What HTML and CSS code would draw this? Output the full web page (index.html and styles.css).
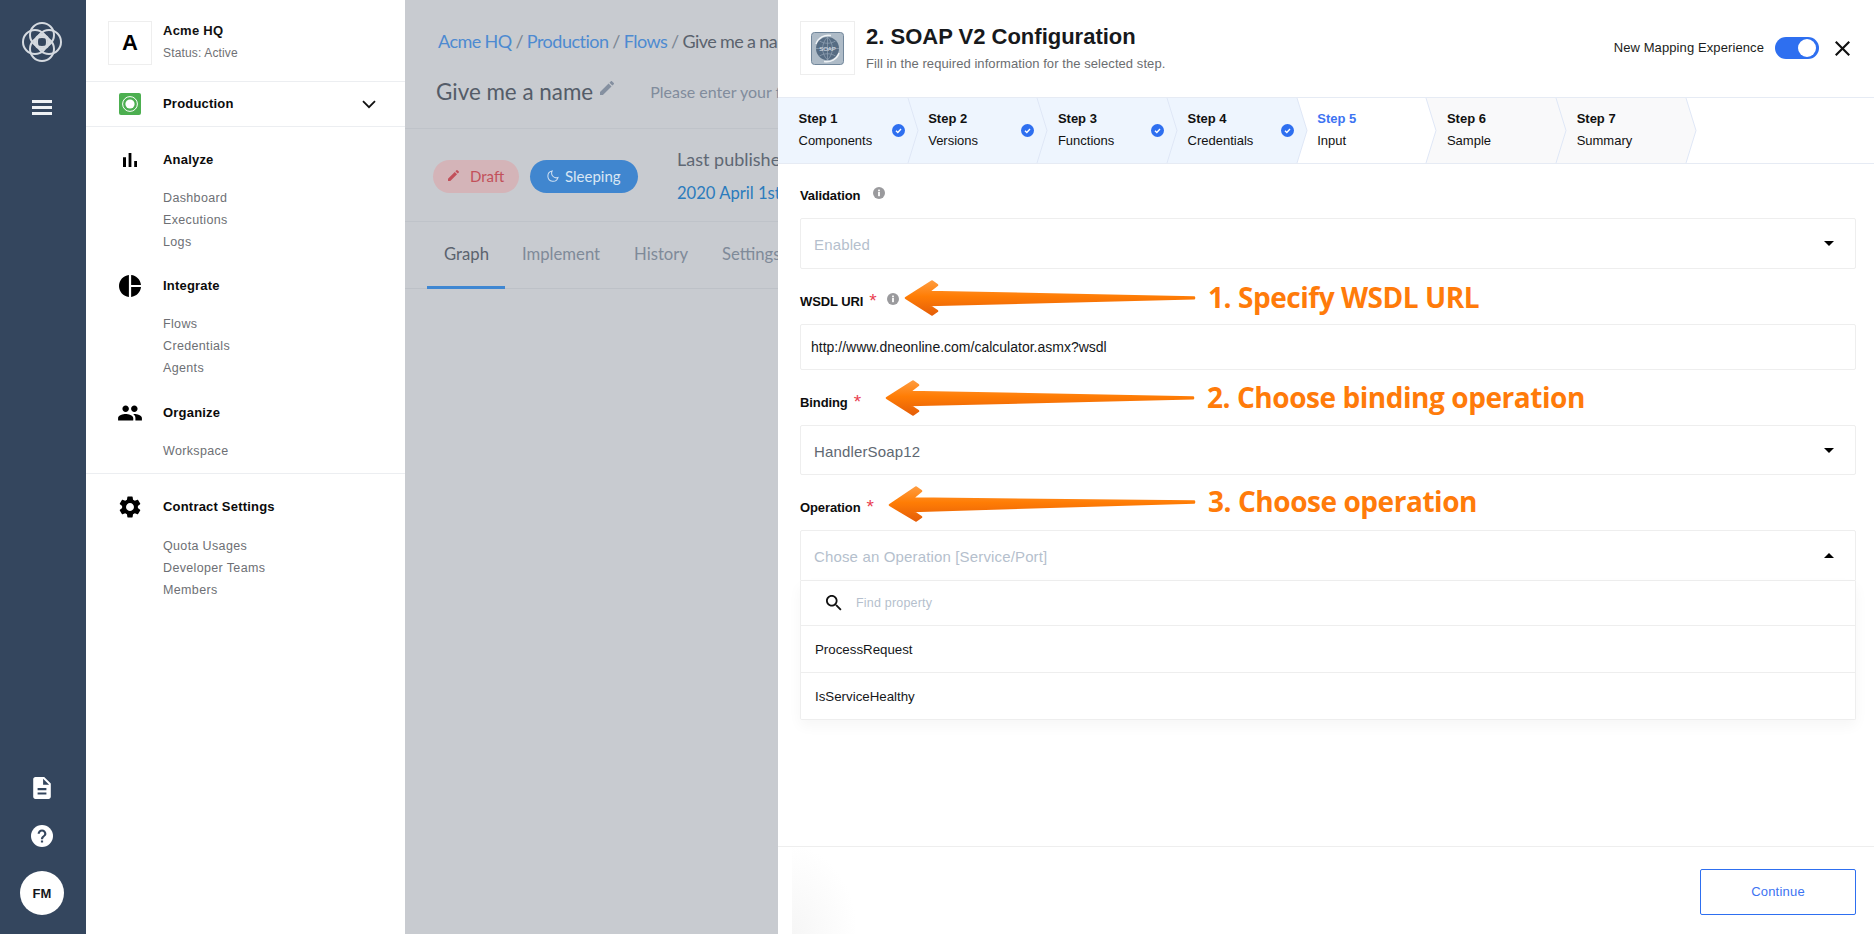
FILE: index.html
```html
<!DOCTYPE html>
<html lang="en">
<head>
<meta charset="utf-8">
<title>SOAP V2 Configuration</title>
<link rel="stylesheet" href="styles.css">
</head>
<body>
<div class="app">
  <aside class="rail">
    <svg class="logo" viewBox="0 0 40 40" fill="none" stroke="#d5dae0" stroke-width="2">
      <circle cx="20" cy="13" r="12"/><circle cx="20" cy="27" r="12"/><circle cx="13" cy="20" r="12"/><circle cx="27" cy="20" r="12"/><circle cx="20" cy="20" r="7" stroke-width="2.6"/>
    </svg>
    <div class="burger"><span></span><span></span><span></span></div>
    <div class="rail-spacer"></div>
    <svg class="rail-doc" viewBox="4 2 16 20"><path fill="#fff" d="M14 2H6c-1.1 0-1.99.9-1.99 2L4 20c0 1.1.89 2 1.99 2H18c1.1 0 2-.9 2-2V8l-6-6zm2 16H8v-2h8v2zm0-4H8v-2h8v2zm-3-5V3.5L18.5 9H13z"/></svg>
    <svg class="rail-help" viewBox="2 2 20 20"><circle cx="12" cy="12" r="10" fill="#fff"/><path fill="#34465e" d="M11 18h2v-2h-2v2zM12 6c-2.21 0-4 1.79-4 4h2c0-1.1.9-2 2-2s2 .9 2 2c0 2-3 1.75-3 5h2c0-2.25 3-2.5 3-5 0-2.21-1.79-4-4-4z"/></svg>
    <div class="avatar">FM</div>
  </aside>

  <nav class="nav">
    <div class="org">
      <div class="org-badge">A</div>
      <div class="org-text">
        <div class="org-name">Acme HQ</div>
        <div class="org-status">Status: Active</div>
      </div>
    </div>
    <div class="env">
      <span class="nav-icon"><svg class="env-icon" viewBox="0 0 22 22"><rect width="22" height="22" rx="2" fill="#4caf50"/><circle cx="11" cy="11" r="7.4" fill="none" stroke="#fff" stroke-width="1"/><circle cx="11" cy="11" r="4.6" fill="#fff"/></svg></span>
      <span class="nav-title">Production</span>
      <svg class="env-chevron" viewBox="0 0 14 9" fill="none" stroke="#111" stroke-width="1.8"><path d="M1 1.2l6 6 6-6"/></svg>
    </div>
    <section class="nav-group nav-group-analyze">
      <div class="nav-head"><span class="nav-icon"><svg class="icon-24" viewBox="0 0 24 24"><path d="M5 9.2h3V19H5zM10.6 5h2.8v14h-2.8zm5.6 8H19v6h-2.8z"/></svg></span><span class="nav-title">Analyze</span></div>
      <ul class="nav-items"><li>Dashboard</li><li>Executions</li><li>Logs</li></ul>
    </section>
    <section class="nav-group">
      <div class="nav-head"><span class="nav-icon"><svg class="icon-22" viewBox="2 2 20 20"><path d="M11 2v20c-5.07-.5-9-4.79-9-10s3.93-9.5 9-10zm2.03 0v8.99H22c-.47-4.74-4.24-8.52-8.97-8.99zm0 11.01V22c4.74-.47 8.5-4.25 8.97-8.99h-8.97z"/></svg></span><span class="nav-title">Integrate</span></div>
      <ul class="nav-items"><li>Flows</li><li>Credentials</li><li>Agents</li></ul>
    </section>
    <section class="nav-group nav-group-last">
      <div class="nav-head"><span class="nav-icon"><svg class="icon-people" viewBox="0 0 24 24"><path d="M16 11c1.66 0 2.99-1.34 2.99-3S17.66 5 16 5c-1.66 0-3 1.34-3 3s1.34 3 3 3zm-8 0c1.66 0 2.99-1.34 2.99-3S9.66 5 8 5C6.34 5 5 6.34 5 8s1.34 3 3 3zm0 2c-2.33 0-7 1.17-7 3.5V19h14v-2.5c0-2.33-4.67-3.5-7-3.5zm8 0c-.29 0-.62.02-.97.05 1.16.84 1.97 1.97 1.97 3.45V19h6v-2.5c0-2.33-4.67-3.5-7-3.5z"/></svg></span><span class="nav-title">Organize</span></div>
      <ul class="nav-items"><li>Workspace</li></ul>
    </section>
    <section class="nav-group nav-group-contract">
      <div class="nav-head"><span class="nav-icon"><svg class="icon-24b" viewBox="2 2 20 20"><path d="M19.14 12.94c.04-.3.06-.61.06-.94 0-.32-.02-.64-.07-.94l2.03-1.58c.18-.14.23-.41.12-.61l-1.92-3.32c-.12-.22-.37-.29-.59-.22l-2.39.96c-.5-.38-1.03-.7-1.62-.94l-.36-2.54c-.04-.24-.24-.41-.48-.41h-3.84c-.24 0-.43.17-.47.41l-.36 2.54c-.59.24-1.13.57-1.62.94l-2.39-.96c-.22-.08-.47 0-.59.22L2.74 8.87c-.12.21-.08.47.12.61l2.03 1.58c-.05.3-.09.63-.09.94s.02.64.07.94l-2.03 1.58c-.18.14-.23.41-.12.61l1.92 3.32c.12.22.37.29.59.22l2.39-.96c.5.38 1.03.7 1.62.94l.36 2.54c.05.24.24.41.48.41h3.84c.24 0 .44-.17.47-.41l.36-2.54c.59-.24 1.13-.56 1.62-.94l2.39.96c.22.08.47 0 .59-.22l1.92-3.32c.12-.22.07-.47-.12-.61l-2.01-1.58zM12 15.6c-1.98 0-3.6-1.62-3.6-3.6s1.62-3.6 3.6-3.6 3.6 1.62 3.6 3.6-1.62 3.6-3.6 3.6z"/></svg></span><span class="nav-title">Contract Settings</span></div>
      <ul class="nav-items nav-items-contract"><li>Quota Usages</li><li>Developer Teams</li><li>Members</li></ul>
    </section>
  </nav>

  <main class="flow-page">
    <div class="flow-top">
      <div class="crumbs"><span class="crumb-link">Acme HQ</span> <span class="crumb-sep">/</span> <span class="crumb-link">Production</span> <span class="crumb-sep">/</span> <span class="crumb-link">Flows</span> <span class="crumb-sep">/</span> <span class="crumb-now">Give me a name</span></div>
      <div class="flow-name-row">
        <span class="flow-name">Give me a name</span>
        <svg class="flow-pencil" viewBox="3 3 18 18"><path d="M3 17.25V21h3.75L17.81 9.94l-3.75-3.75L3 17.25zM20.71 7.04c.39-.39.39-1.02 0-1.41l-2.34-2.34c-.39-.39-1.02-.39-1.41 0l-1.83 1.83 3.75 3.75 1.83-1.83z"/></svg>
        <span class="flow-desc">Please enter your flow description</span>
      </div>
    </div>
    <div class="flow-status">
      <span class="pill pill-draft"><svg class="pill-icon" viewBox="3 3 18 18"><path d="M3 17.25V21h3.75L17.81 9.94l-3.75-3.75L3 17.25zM20.71 7.04c.39-.39.39-1.02 0-1.41l-2.34-2.34c-.39-.39-1.02-.39-1.41 0l-1.83 1.83 3.75 3.75 1.83-1.83z"/></svg>Draft</span>
      <span class="pill pill-sleep"><svg class="pill-moon" viewBox="0 0 14 14" fill="none" stroke="#cfe0f2" stroke-width="1.2"><path d="M6 1.2a6 6 0 1 0 6.8 7.6A5.5 5.5 0 0 1 6 1.2z"/></svg>Sleeping</span>
      <div class="published">
        <div class="pub-label">Last published</div>
        <div class="pub-date">2020 April 1st at 10:21</div>
      </div>
    </div>
    <div class="tabs">
      <span class="tab tab-active">Graph</span>
      <span class="tab">Implement</span>
      <span class="tab">History</span>
      <span class="tab">Settings</span>
    </div>
  </main>

  <section class="panel">
    <header class="panel-head">
      <div class="comp-badge">
        <svg class="soap-logo" viewBox="0 0 33 33">
          <rect x=".5" y=".5" width="32" height="32" rx="3" fill="#aebbc7" stroke="#71869a"/>
          <path d="M5 12A13 13 0 0 1 20 3.5" fill="none" stroke="#eef2f5" stroke-width="1.6"/>
          <path d="M28 21A13 13 0 0 1 13 29.5" fill="none" stroke="#eef2f5" stroke-width="1.6"/>
          <circle cx="16.5" cy="16.5" r="11.5" fill="#566c83"/>
          <path d="M5 16.5h23M16.5 5v23M8.5 9c5 3 11 3 16 0M8.5 24c5-3 11-3 16 0M16.5 5c-6.500 6.500-6.500 16.500 0 23M16.500 5c6.500 6.500 6.500 16.500 0 23" fill="none" stroke="#93a5b6" stroke-width=".7"/>
          <text class="soap-text" x="16.5" y="18.500" text-anchor="middle">SOAP</text>
        </svg>
      </div>
      <div class="panel-titles">
        <h1 class="panel-title">2. SOAP V2 Configuration</h1>
        <p class="panel-sub">Fill in the required information for the selected step.</p>
      </div>
      <div class="panel-tools">
        <span class="mapping-label">New Mapping Experience</span>
        <span class="toggle"><span class="toggle-knob"></span></span>
        <svg class="close-x" viewBox="5 5 14 14"><path d="M19 6.41L17.59 5 12 10.59 6.41 5 5 6.41 10.59 12 5 17.59 6.41 19 12 13.41 17.59 19 19 17.59 13.41 12z"/></svg>
      </div>
    </header>

    <div class="stepper">
      <div class="step step-done"><div class="step-text"><b>Step 1</b><span>Components</span></div><svg class="step-check" viewBox="0 0 13 13"><circle cx="6.5" cy="6.5" r="6.5"/><path d="M4 6.8l1.8 1.7L9 5"/></svg><svg class="step-tip" viewBox="0 0 11 66" preserveAspectRatio="none"><path d="M0 0L10 33L0 66"/></svg></div>
      <div class="step step-done"><div class="step-text"><b>Step 2</b><span>Versions</span></div><svg class="step-check" viewBox="0 0 13 13"><circle cx="6.5" cy="6.5" r="6.5"/><path d="M4 6.8l1.8 1.7L9 5"/></svg><svg class="step-tip" viewBox="0 0 11 66" preserveAspectRatio="none"><path d="M0 0L10 33L0 66"/></svg></div>
      <div class="step step-done"><div class="step-text"><b>Step 3</b><span>Functions</span></div><svg class="step-check" viewBox="0 0 13 13"><circle cx="6.5" cy="6.5" r="6.5"/><path d="M4 6.8l1.8 1.7L9 5"/></svg><svg class="step-tip" viewBox="0 0 11 66" preserveAspectRatio="none"><path d="M0 0L10 33L0 66"/></svg></div>
      <div class="step step-done"><div class="step-text"><b>Step 4</b><span>Credentials</span></div><svg class="step-check" viewBox="0 0 13 13"><circle cx="6.5" cy="6.5" r="6.5"/><path d="M4 6.8l1.8 1.7L9 5"/></svg><svg class="step-tip" viewBox="0 0 11 66" preserveAspectRatio="none"><path d="M0 0L10 33L0 66"/></svg></div>
      <div class="step step-now"><div class="step-text"><b>Step 5</b><span>Input</span></div><svg class="step-tip" viewBox="0 0 11 66" preserveAspectRatio="none"><path d="M0 0L10 33L0 66"/></svg></div>
      <div class="step step-todo"><div class="step-text"><b>Step 6</b><span>Sample</span></div><svg class="step-tip" viewBox="0 0 11 66" preserveAspectRatio="none"><path d="M0 0L10 33L0 66"/></svg></div>
      <div class="step step-todo"><div class="step-text"><b>Step 7</b><span>Summary</span></div><svg class="step-tip" viewBox="0 0 11 66" preserveAspectRatio="none"><path d="M0 0L10 33L0 66"/></svg></div>
    </div>

    <div class="form">
      <div class="label label-validation">Validation<svg class="info" viewBox="0 0 12 12"><circle cx="6" cy="6" r="6"/><rect x="5.1" y="5" width="1.8" height="4.2"/><rect x="5.1" y="2.6" width="1.8" height="1.7"/></svg></div>
      <div class="box box-select"><span class="placeholder">Enabled</span><span class="caret"></span></div>

      <div class="label label-gap">WSDL URI<i class="req">*</i><svg class="info info-wsdl" viewBox="0 0 12 12"><circle cx="6" cy="6" r="6"/><rect x="5.1" y="5" width="1.8" height="4.2"/><rect x="5.1" y="2.6" width="1.8" height="1.7"/></svg></div>
      <div class="box box-input">http://www.dneonline.com/calculator.asmx?wsdl</div>

      <div class="label label-gap">Binding<i class="req">*</i></div>
      <div class="box box-select box-binding"><span class="value">HandlerSoap12</span><span class="caret"></span></div>

      <div class="label label-gap">Operation<i class="req">*</i></div>
      <div class="box box-select box-open"><span class="placeholder">Chose an Operation [Service/Port]</span><span class="caret caret-up"></span></div>
      <div class="dropdown">
        <div class="drop-search"><svg class="search-icon" viewBox="3 3 18 18"><path d="M15.5 14h-.79l-.28-.27C15.41 12.59 16 11.11 16 9.5 16 5.91 13.09 3 9.5 3S3 5.91 3 9.5 5.91 16 9.5 16c1.61 0 3.09-.59 4.23-1.57l.27.28v.79l5 4.99L20.49 19l-4.99-5zm-6 0C7.01 14 5 11.99 5 9.5S7.01 5 9.5 5 14 7.01 14 9.5 11.99 14 9.5 14z"/></svg><span class="drop-find">Find property</span></div>
        <div class="drop-item">ProcessRequest</div>
        <div class="drop-item">IsServiceHealthy</div>
      </div>
    </div>

    <footer class="panel-foot">
      <div class="foot-fade"></div>
      <button class="btn-continue" type="button">Continue</button>
    </footer>

    <div class="callout callout-1">
      <svg class="callout-arrow" width="292" height="36" viewBox="0 0 292 36"><defs><linearGradient id="ag1" x1="0" y1="0" x2="0" y2="1"><stop offset="0" stop-color="#ff9a3c"/><stop offset=".45" stop-color="#ff7d05"/><stop offset="1" stop-color="#e65f08"/></linearGradient></defs><path fill="url(#ag1)" stroke="url(#ag1)" stroke-width="2.5" stroke-linejoin="round" d="M2 18L28 1.500L33 5L24 12L290 17.400L290 18.200L24 25L33 31L28 34.500Z"/></svg>
      <span class="callout-text">1. Specify WSDL URL</span>
    </div>
    <div class="callout callout-2">
      <svg class="callout-arrow" width="310" height="36" viewBox="0 0 310 36"><path fill="url(#ag1)" stroke="url(#ag1)" stroke-width="2.5" stroke-linejoin="round" d="M2 18L28 1.500L33 5L24 12L308 17.400L308 18.200L24 25L33 31L28 34.500Z"/></svg>
      <span class="callout-text">2. Choose binding operation</span>
    </div>
    <div class="callout callout-3">
      <svg class="callout-arrow" width="308" height="36" viewBox="0 0 308 36"><path fill="url(#ag1)" stroke="url(#ag1)" stroke-width="2.5" stroke-linejoin="round" d="M2 19L28 1.500L33 5L24 12.500L306 15.600L306 16.400L24 25L33 31L28 34.500Z"/></svg>
      <span class="callout-text callout-text-high">3. Choose operation</span>
    </div>
  </section>
</div>
</body>
</html>
```

FILE: styles.css
```css
* { box-sizing: border-box; }
html, body { margin: 0; padding: 0; height: 100%; }
body { font-family: "Liberation Sans", Arial, sans-serif; color: #111; background: #fff; overflow: hidden; }
ul { list-style: none; margin: 0; padding: 0; }
h1, p { margin: 0; }

.app { display: flex; width: 1874px; height: 934px; }

/* icon rail */
.rail { width: 86px; flex: none; background: #34465e; display: flex; flex-direction: column; align-items: center; padding: 22px 2px 19px 0; }
.logo { width: 40px; height: 40px; }
.burger { margin-top: 38px; width: 20px; height: 15px; display: flex; flex-direction: column; justify-content: space-between; }
.burger span { display: block; height: 3px; background: #eef1f4; }
.rail-spacer { flex: 1; }
.rail-doc { width: 18px; height: 22px; }
.rail-help { width: 22px; height: 22px; margin-top: 26px; }
.avatar { width: 44px; height: 44px; margin-top: 24px; border-radius: 50%; background: #fff; color: #15181c; font-size: 13px; font-weight: 700; display: flex; align-items: center; justify-content: center; }

/* nav */
.nav { width: 319px; flex: none; background: #fff; }
.org { height: 82px; border-bottom: 1px solid #eceef1; display: flex; align-items: flex-start; padding: 21px 0 0 22px; }
.org-badge { width: 44px; height: 44px; border: 1px solid #eeeeee; display: flex; align-items: center; justify-content: center; font-size: 22px; font-weight: 700; color: #000; }
.org-text { margin-left: 11px; padding-top: 1px; }
.org-name { font-size: 13px; font-weight: 700; line-height: 18px; letter-spacing: .25px; }
.org-status { font-size: 12px; line-height: 18px; margin-top: 4px; color: #6f7175; letter-spacing: .15px; }
.env { height: 45px; border-bottom: 1px solid #eceef1; display: flex; align-items: center; }
.nav-icon { width: 88px; flex: none; display: flex; justify-content: center; }
.nav-icon svg { fill: #000; }
.env-icon { width: 22px; height: 22px; }
.nav-title { font-size: 13px; font-weight: 700; color: #0b0b0b; letter-spacing: .2px; margin-left: -11px; line-height: 24px; }
.env-chevron { width: 14px; height: 9px; margin-left: auto; margin-right: 29px; }
.nav-group { padding-top: 20px; margin-bottom: 1px; }
.nav-group-analyze { padding-top: 21px; }
.nav-head { height: 24px; display: flex; align-items: center; }
.icon-24 { width: 24px; height: 24px; }
.icon-22 { width: 22px; height: 22px; }
.icon-people { width: 26px; height: 26px; }
.icon-24b { width: 22px; height: 22px; }
.nav-items { margin-top: 15px; padding-left: 77px; }
.nav-items li { font-size: 12.5px; line-height: 22px; color: #6d6f74; letter-spacing: .35px; }
.nav-items-contract { margin-top: 16px; }
.nav-group-last { padding-top: 21px; padding-bottom: 11px; border-bottom: 1px solid #eceef1; margin-bottom: 0; }
.nav-group-contract { padding-top: 21px; }

/* dimmed page behind the panel */
.flow-page { width: 373px; flex: none; background: #c8cbd0; overflow: hidden; font-family: Lato, "Noto Sans", sans-serif; }
.flow-page * { white-space: nowrap; }
.flow-top { height: 129px; border-bottom: 1px solid #bfc3c9; padding: 30px 0 0 33px; }
.crumbs { font-size: 18px; line-height: 22px; color: #7d8896; letter-spacing: -.5px; word-spacing: -.4px; }
.crumb-link { color: #4d8ad1; }
.crumb-sep { color: #7a8592; }
.crumb-now { color: #5a626d; }
.flow-name-row { display: flex; align-items: center; margin: 24px 0 0 -2px; height: 30px; }
.flow-name { font-size: 22.4px; color: #545c68; }
.flow-pencil { width: 14px; height: 14px; margin: -6px 0 0 7px; fill: #8590a0; flex: none; }
.flow-desc { font-size: 16px; color: #818c9c; margin-left: 36px; }
.flow-status { height: 93px; border-bottom: 1px solid #bfc3c9; display: flex; align-items: flex-start; padding: 31px 0 0 28px; }
.pill { height: 33px; border-radius: 17px; display: flex; align-items: center; font-size: 15px; flex: none; padding-bottom: 2px; }
.pill-draft { width: 86px; background: #d4b4b8; color: #c2505a; padding-left: 15px; }
.pill-icon { width: 11px; height: 11px; fill: #c2505a; margin-right: 11px; }
.pill-sleep { width: 108px; margin-left: 11px; background: #4086cf; color: #d9e6f4; padding-left: 17px; }
.pill-moon { width: 12px; height: 12px; margin-right: 6px; }
.published { margin-left: 39px; margin-top: -14px; flex: none; }
.pub-label { font-size: 18px; line-height: 26px; color: #5f6874; }
.pub-date { font-size: 16.6px; line-height: 26px; margin-top: 8px; color: #2b7bbd; }
.tabs { height: 67px; border-bottom: 1px solid #bdc1c7; display: flex; padding-left: 22px; }
.tab { height: 67px; padding: 20px 17px 0 17px; font-size: 16.7px; line-height: 24px; color: #7f8a99; flex: none; }
.tab-active { color: #5b636e; border-bottom: 3px solid #3f87d2; padding-right: 16px; }

/* side panel */
.panel { position: relative; flex: 1; min-width: 0; background: #fff; display: flex; flex-direction: column; }
.panel-head { height: 97px; flex: none; display: flex; align-items: flex-start; padding: 21px 0 0 22px; }
.comp-badge { width: 55px; height: 54px; border: 1px solid #eeeeee; display: flex; align-items: center; justify-content: center; flex: none; }
.soap-logo { width: 33px; height: 33px; }
.soap-text { font-family: "Liberation Sans", sans-serif; font-size: 6px; fill: #e2e8ee; }
.panel-titles { margin-left: 11px; }
.panel-title { font-size: 22px; font-weight: 700; line-height: 26px; margin-top: 3px; color: #17191c; }
.panel-sub { font-size: 13px; line-height: 16px; margin-top: 6px; color: #6b6d70; letter-spacing: .07px; }
.panel-tools { margin-left: auto; display: flex; align-items: center; height: 22px; margin-top: 16px; padding-right: 24px; }
.mapping-label { font-size: 13px; color: #1b1d20; letter-spacing: .1px; padding-bottom: 1px; }
.toggle { width: 44px; height: 22px; border-radius: 11px; background: #2e6ff0; margin-left: 11px; position: relative; display: block; }
.toggle-knob { position: absolute; top: 2px; right: 3px; width: 18px; height: 18px; border-radius: 50%; background: #fff; }
.close-x { width: 15px; height: 15px; margin-left: 16px; fill: #111; }

.stepper { height: 67px; flex: none; display: flex; border-top: 1px solid #e6ebf4; border-bottom: 1px solid #e6ebf4; }
.step { width: 129.7px; flex: none; position: relative; display: flex; align-items: center; padding-left: 20.5px; }
.step-done { background: #eef5fe; }
.step-now { background: #fff; }
.step-todo { background: #f9f9fa; }
.step-text { display: flex; flex-direction: column; font-size: 13px; line-height: 22px; color: #111; padding-bottom: 2px; }
.step-now b { color: #3d73f2; }
.step-check { position: absolute; top: 26px; right: 3px; width: 13px; height: 13px; }
.step-check circle { fill: #2e6ff0; }
.step-check path { fill: none; stroke: #fff; stroke-width: 1.4; }
.step-tip { position: absolute; left: 100%; top: 0; width: 11px; height: 65px; z-index: 1; overflow: visible; }
.step-done .step-tip path { fill: #eef5fe; stroke: #dfe7f6; }
.step-now .step-tip path { fill: #fff; stroke: #dfe7f6; }
.step-todo .step-tip path { fill: #f9f9fa; stroke: #dfe7f6; }

.form { flex: 1; min-height: 0; padding: 21px 18px 0 22px; }
.label { height: 20px; display: flex; align-items: center; font-size: 13px; font-weight: 700; color: #0d0d0d; padding-top: 2px; letter-spacing: -.1px; }
.label-validation { padding-top: 0; }
.label-gap { margin-top: 21px; }
.req { color: #e9404f; font-style: normal; font-weight: 400; font-size: 19px; margin-left: 6px; line-height: 20px; }
.info { width: 12px; height: 12px; margin: -4px 0 0 13px; flex: none; }
.info-wsdl { margin: -4px 0 0 10px; }
.info circle { fill: #9a9a9d; }
.info rect { fill: #fff; }
.box { border: 1px solid #eeeeee; border-radius: 2px; margin-top: 13px; display: flex; align-items: center; justify-content: space-between; padding: 2px 21px 0 13px; font-size: 15px; letter-spacing: .15px; }
.box-select { height: 51px; }
.box-binding { height: 50px; margin-top: 14px; }
.box-input { height: 46px; margin-top: 14px; padding: 0 21px 0 10px; font-size: 14px; letter-spacing: 0; color: #15171a; }
.box-open { border-radius: 2px 2px 0 0; margin-top: 14px; }
.placeholder { color: #b5bfcd; }
.value { color: #606872; }
.caret { width: 0; height: 0; border-left: 5px solid transparent; border-right: 5px solid transparent; border-top: 5px solid #000; margin-top: -2px; }
.caret-up { border-top: 0; border-bottom: 5px solid #000; }
.dropdown { border: 1px solid #eeeeee; border-top: 0; box-shadow: 0 6px 14px rgba(0,0,0,.04); border-radius: 0 0 2px 2px; }
.drop-search { height: 45px; display: flex; align-items: center; padding-left: 25px; border-bottom: 1px solid #eeeeee; }
.search-icon { width: 16px; height: 16px; fill: #111; }
.drop-find { margin-left: 14px; font-size: 12.5px; color: #b5bfcd; letter-spacing: .2px; }
.drop-item { height: 47px; display: flex; align-items: center; padding-left: 14px; font-size: 13.3px; color: #15171a; border-bottom: 1px solid #eeeeee; }
.drop-item:last-child { border-bottom: 0; height: 46px; }

.panel-foot { position: relative; height: 88px; flex: none; border-top: 1px solid #eeeeee; display: flex; justify-content: flex-end; align-items: flex-start; padding: 22px 18px 0 0; }
.foot-fade { position: absolute; left: 14px; top: 0; width: 64px; bottom: 0; background: radial-gradient(ellipse at 0 100%, #f6f6f6, #fff 72%); pointer-events: none; }
.btn-continue { position: relative; width: 156px; height: 46px; border: 1.5px solid #2e6ff0; border-radius: 2px; background: #fff; color: #3d73f2; font-family: "Liberation Sans", sans-serif; font-size: 13px; letter-spacing: .2px; padding: 0 0 2px; }

/* annotations drawn over the screenshot */
.callout { position: absolute; display: flex; align-items: center; height: 36px; }
.callout-arrow { flex: none; display: block; }
.callout-text { margin: 0 0 3px 12px; font-family: "Open Sans", "Noto Sans", sans-serif; font-weight: 700; font-size: 28px; letter-spacing: -.45px; color: #ff7b0a; white-space: nowrap; }
.callout-text-high { margin-bottom: 6px; }
.callout-1 { left: 126px; top: 280px; }
.callout-2 { left: 107px; top: 380px; }
.callout-3 { left: 110px; top: 486px; }
```
